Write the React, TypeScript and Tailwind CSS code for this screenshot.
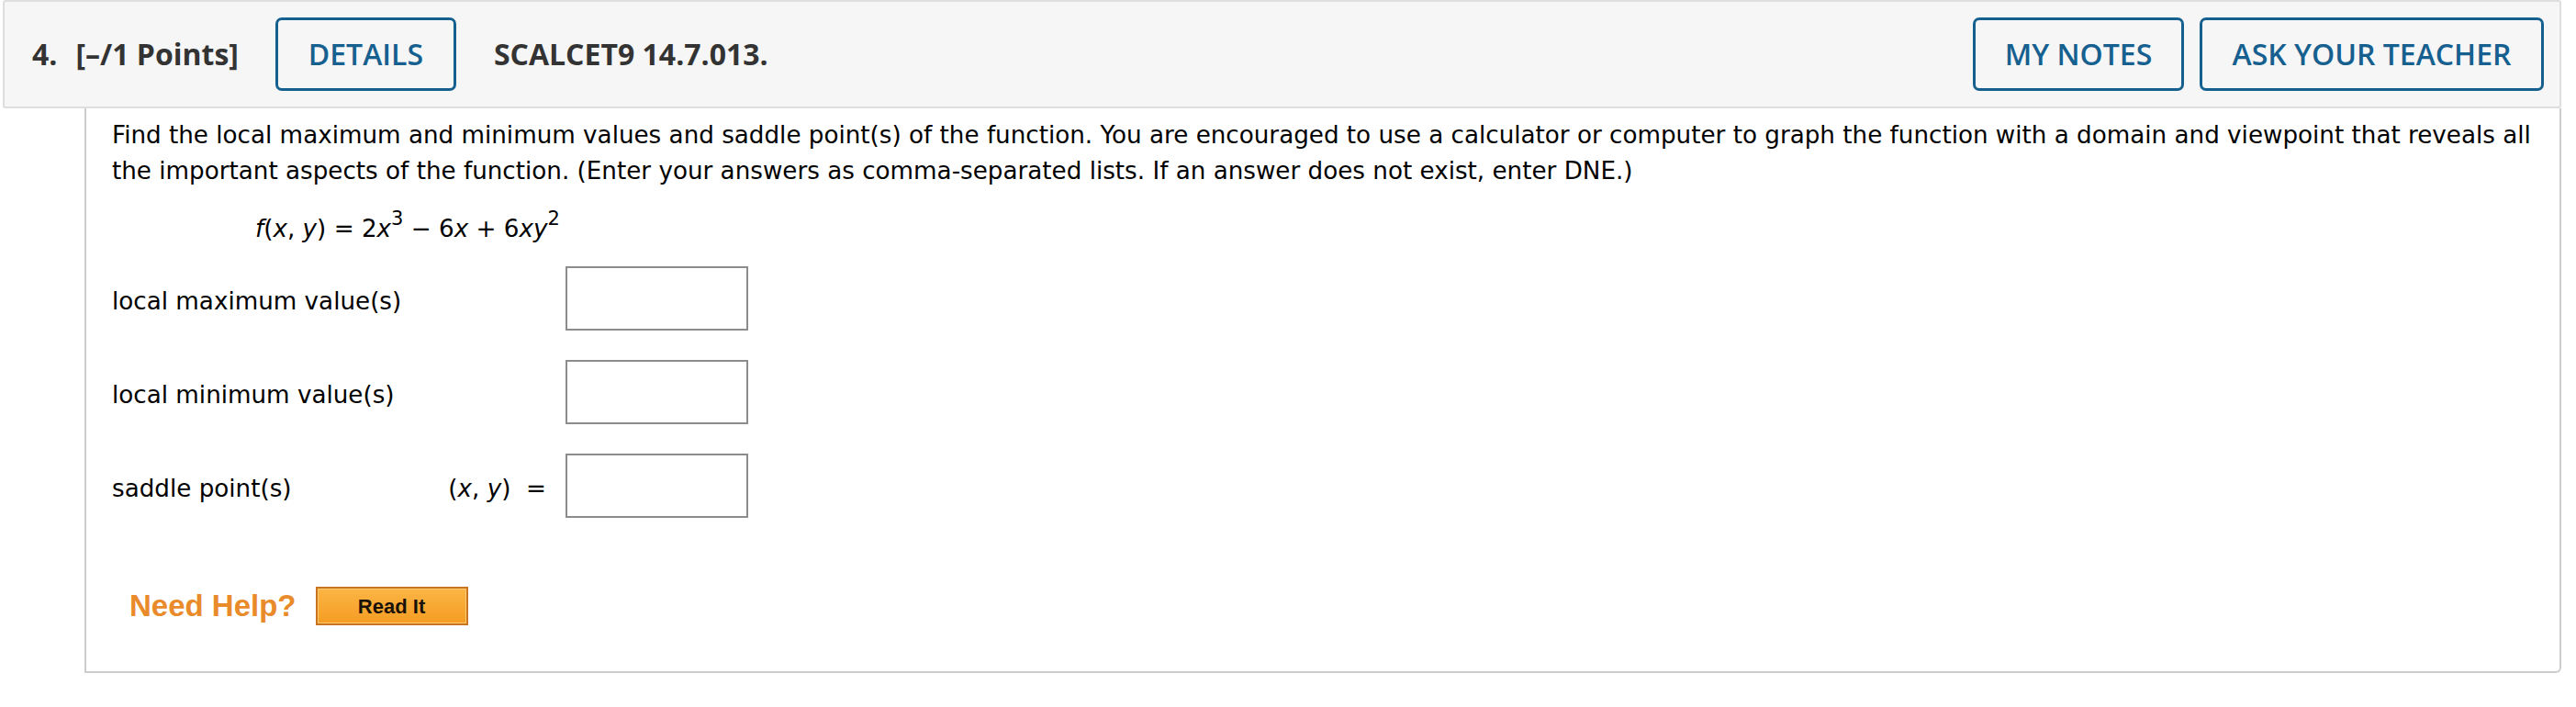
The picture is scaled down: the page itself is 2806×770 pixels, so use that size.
import React from "react";

const verdana = { fontFamily: '"DejaVu Sans", Verdana, sans-serif' };

function HeaderButton({ label, width }: { label: string; width: string }) {
  return (
    <button
      className={`flex h-[80px] items-center justify-center rounded-[7px] border-[3px] border-[#16608f] text-[32px] font-semibold text-[#16608f] ${width}`}
    >
      {label}
    </button>
  );
}

function AnswerBox() {
  return <div className="h-[70px] w-[199px] border-2 border-[#8c8c8c] bg-white" />;
}

function Sup({ children }: { children: React.ReactNode }) {
  return <sup className="-top-[13px] text-[21px]">{children}</sup>;
}

export default function App() {
  return (
    <div className="min-h-[770px] bg-white">
      {/* question header */}
      <div
        className="ml-[3px] mr-[16px] flex h-[118px] items-center rounded-[3px] border-2 border-[#dedede] bg-[#f6f6f6] pl-[30px] pr-[17px]"
        style={{ fontFamily: '"Open Sans", sans-serif' }}
      >
        <span className="text-[32px] font-bold text-[#333333]">4.</span>
        <span className="ml-[20px] text-[32px] font-bold text-[#333333]">[–/1 Points]</span>
        <div className="ml-[40px]">
          <HeaderButton label="DETAILS" width="w-[197px]" />
        </div>
        <span className="ml-[41px] text-[32px] font-bold text-[#333333]">SCALCET9 14.7.013.</span>
        <div className="ml-auto flex gap-[17px]">
          <HeaderButton label="MY NOTES" width="w-[230px]" />
          <HeaderButton label="ASK YOUR TEACHER" width="w-[375px]" />
        </div>
      </div>

      {/* question body */}
      <div
        className="ml-[92px] mr-[16px] rounded-br-[6px] border-x-2 border-b-2 border-[#cccccc] pb-[50px] pl-[28px] pr-[4px] pt-[10px] text-[26.2px] text-black"
        style={verdana}
      >
        <p className="leading-[39px]">
          Find the local maximum and minimum values and saddle point(s) of the function. You are encouraged to use a
          calculator or computer to graph the function with a domain and viewpoint that reveals all the important
          aspects of the function. (Enter your answers as comma-separated lists. If an answer does not exist, enter
          DNE.)
        </p>

        <div className="ml-[156px] mt-[24px] leading-[39px]">
          <i>f</i>(<i>x</i>, <i>y</i>) = 2<i>x</i>
          <Sup>3</Sup> − 6<i>x</i> + 6<i>xy</i>
          <Sup>2</Sup>
        </div>

        <div className="mt-[21px] flex flex-col gap-[32px]">
          <div className="flex h-[70px] items-center">
            <span className="w-[494px] pt-[8px]">local maximum value(s)</span>
            <AnswerBox />
          </div>
          <div className="flex h-[70px] items-center">
            <span className="w-[494px] pt-[8px]">local minimum value(s)</span>
            <AnswerBox />
          </div>
          <div className="flex h-[70px] items-center">
            <div className="flex w-[494px] justify-between pr-[21px] pt-[8px]">
              <span>saddle point(s)</span>
              <span>
                (<i>x</i>, <i>y</i>) &nbsp;=
              </span>
            </div>
            <AnswerBox />
          </div>
        </div>

        <div
          className="ml-[19px] mt-[75px] flex h-[42px] items-center gap-[21px]"
          style={{ fontFamily: '"Liberation Sans", Arial, sans-serif' }}
        >
          <span className="text-[33px] font-bold text-[#e98b2a]">Need Help?</span>
          <div className="h-[42px] w-[166px] border-2 border-[#c9741c] bg-[#f5a22a]">
            <div className="flex h-full items-center justify-center border border-[#ffcb72] bg-gradient-to-b from-[#fcb443] to-[#f49d22] text-[22px] font-bold text-[#1a1208]">
              Read It
            </div>
          </div>
        </div>
      </div>
    </div>
  );
}
